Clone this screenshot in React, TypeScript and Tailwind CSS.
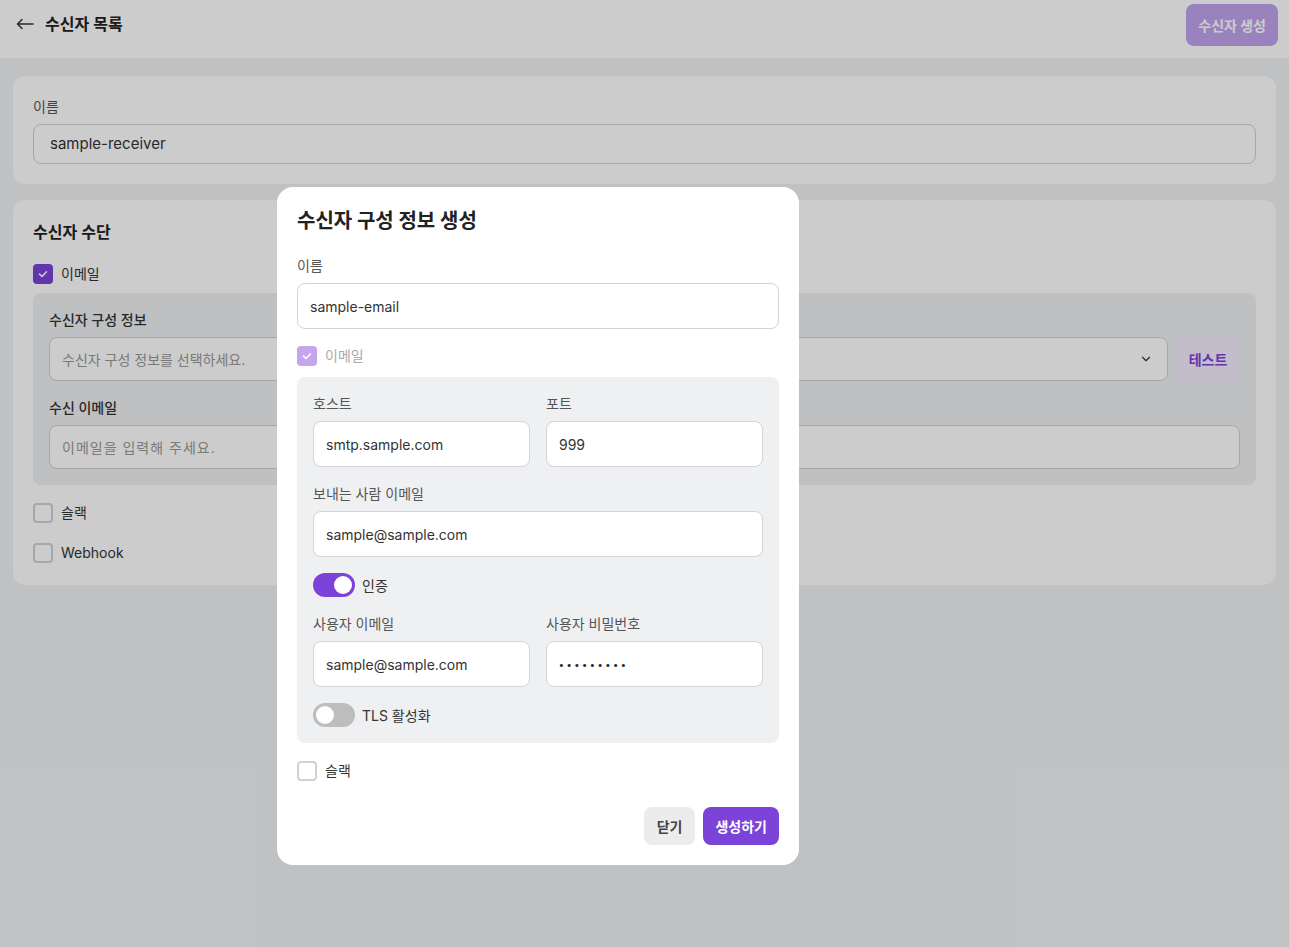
import React from "react";
import { ChevronDown } from "lucide-react";

const font = { fontFamily: '"Inter", "Noto Sans CJK KR", sans-serif' };

function Check({ size = 12 }: { size?: number }) {
  return (
    <svg width={size} height={size} viewBox="0 0 12 12" fill="none">
      <path d="M2.5 6.2L5 8.5L9.5 3.8" stroke="white" strokeWidth="1.6" strokeLinecap="round" strokeLinejoin="round" />
    </svg>
  );
}

function Checkbox({ checked, disabled, label }: { checked?: boolean; disabled?: boolean; label: string }) {
  return (
    <div className="flex items-center gap-2 h-5">
      {checked ? (
        <div className={`w-5 h-5 rounded-[4px] flex items-center justify-center ${disabled ? "bg-[#c4a6ef]" : "bg-[#7c43d9]"}`}>
          <Check />
        </div>
      ) : (
        <div className="w-5 h-5 rounded-[4px] border-2 border-[#d2d2d2] bg-white" />
      )}
      <span className={`text-[14px] leading-5 ${disabled ? "text-[#a9a9a9]" : "text-[#333]"}`}>{label}</span>
    </div>
  );
}

function Toggle({ on, label }: { on?: boolean; label: string }) {
  return (
    <div className="flex items-center gap-[7px]">
      <div className={`w-[42px] h-6 rounded-full p-[3px] flex ${on ? "bg-[#7c43d9] justify-end" : "bg-[#bdbdbd] justify-start"}`}>
        <div className="w-[18px] h-[18px] rounded-full bg-white" />
      </div>
      <span className="text-[14px] text-[#333]">{label}</span>
    </div>
  );
}

function Field({ label, value, secret }: { label: string; value: string; secret?: boolean }) {
  return (
    <div className="flex flex-col flex-1 min-w-0">
      <div className="text-[14px] leading-[22px] text-[#555] mb-[6px]">{label}</div>
      <div className="h-[46px] rounded-lg border border-[#d4d4d8] bg-white px-3 flex items-center text-[14px] text-[#333]">
        {secret ? <span className="tracking-[3px] text-[10px] font-bold">{value}</span> : value}
      </div>
    </div>
  );
}

export default function App() {
  return (
    <div className="relative min-h-screen bg-[#f1f2f4]" style={font}>
      {/* header */}
      <div className="h-[58px] bg-white flex items-start justify-between pl-4 pr-[11px] pt-1">
        <div className="flex items-center gap-[11px] h-[40px]">
          <svg width="18" height="12" viewBox="0 0 18 12" fill="none">
            <path d="M17 6H1.5M1.5 6L6 1.5M1.5 6L6 10.5" stroke="#333" strokeWidth="1.5" strokeLinecap="round" strokeLinejoin="round" />
          </svg>
          <span className="text-[16px] font-semibold text-[#222]">수신자 목록</span>
        </div>
        <button className="h-[42px] px-3 rounded-lg bg-[#c1a3ee] text-white text-[14px] font-bold">수신자 생성</button>
      </div>

      <div className="px-[13px] pt-[18px] flex flex-col gap-4">
        {/* name card */}
        <div className="bg-white rounded-xl px-5 pt-[21px] pb-5">
          <div className="text-[14px] leading-5 text-[#555] mb-[7px]">이름</div>
          <div className="h-10 rounded-lg border border-[#d1d1d1] px-4 flex items-center text-[15px] text-[#333]">sample-receiver</div>
        </div>

        {/* receiver means card */}
        <div className="bg-white rounded-xl px-5 pt-5 pb-[22px]">
          <div className="text-[16px] leading-6 font-semibold text-[#222]">수신자 수단</div>
          <div className="mt-5">
            <Checkbox checked label="이메일" />
          </div>
          <div className="mt-[9px] bg-[#eff0f2] rounded-lg p-4 pt-[17px]">
            <div className="text-[14px] leading-5 font-medium text-[#333] mb-[7px]">수신자 구성 정보</div>
            <div className="flex gap-2">
              <div className="flex-1 h-11 rounded-lg border border-[#d1d1d1] bg-white px-3 flex items-center justify-between text-[14px] text-[#999]">
                <span>수신자 구성 정보를 선택하세요.</span>
                <ChevronDown size={14} className="text-[#333] mr-[2px]" />
              </div>
              <button className="w-16 h-11 rounded-lg bg-[#f3ebfe] text-[#7c43d9] text-[14px] font-semibold">테스트</button>
            </div>
            <div className="text-[14px] leading-5 font-medium text-[#333] mt-[17px] mb-[7px]">수신 이메일</div>
            <div className="h-11 rounded-lg border border-[#d1d1d1] bg-white px-3 flex items-center text-[14px] text-[#999] tracking-[1px]">
              이메일을 입력해 주세요.
            </div>
          </div>
          <div className="mt-[18px]">
            <Checkbox label="슬랙" />
          </div>
          <div className="mt-5">
            <Checkbox label="Webhook" />
          </div>
        </div>
      </div>

      {/* overlay */}
      <div className="absolute inset-0 bg-black/20" />

      {/* modal */}
      <div className="absolute left-[277px] top-[187px] w-[522px] bg-white rounded-2xl p-5 flex flex-col">
        <div className="text-[20px] leading-7 font-bold text-[#222]">수신자 구성 정보 생성</div>
        <div className="text-[14px] leading-5 text-[#555] mt-[21px] mb-[7px]">이름</div>
        <div className="h-[46px] rounded-lg border border-[#d4d4d8] bg-white px-3 flex items-center text-[14px] text-[#333]">sample-email</div>
        <div className="mt-[17px]">
          <Checkbox checked disabled label="이메일" />
        </div>
        <div className="mt-[11px] bg-[#eff0f2] rounded-lg p-4 flex flex-col gap-4">
          <div className="flex gap-4">
            <Field label="호스트" value="smtp.sample.com" />
            <Field label="포트" value="999" />
          </div>
          <Field label="보내는 사람 이메일" value="sample@sample.com" />
          <Toggle on label="인증" />
          <div className="flex gap-4">
            <Field label="사용자 이메일" value="sample@sample.com" />
            <Field label="사용자 비밀번호" value="•••••••••" secret />
          </div>
          <Toggle label="TLS 활성화" />
        </div>
        <div className="mt-[18px]">
          <Checkbox label="슬랙" />
        </div>
        <div className="mt-[26px] flex justify-end gap-2">
          <button className="h-[38px] px-[13px] rounded-lg bg-[#ececec] text-[#444] text-[14px] font-semibold">닫기</button>
          <button className="h-[38px] px-3 rounded-lg bg-[#7c43d9] text-white text-[14px] font-bold">생성하기</button>
        </div>
      </div>
    </div>
  );
}
